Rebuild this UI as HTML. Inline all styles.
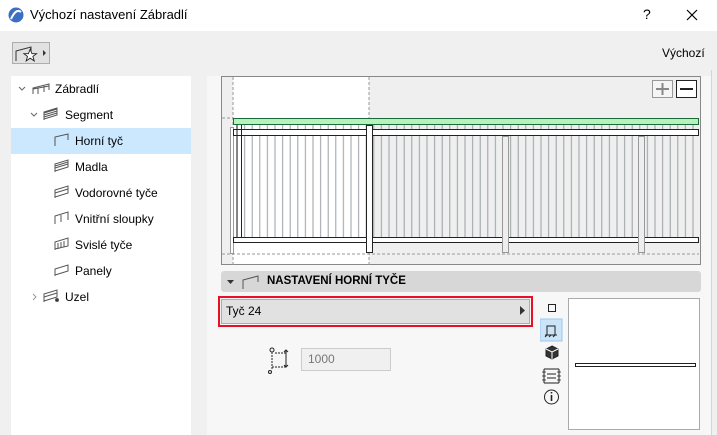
<!DOCTYPE html>
<html><head><meta charset="utf-8"><style>
*{margin:0;padding:0;box-sizing:border-box}
body{width:717px;height:435px;background:#f0f0f0;font-family:"Segoe UI","Liberation Sans",sans-serif;font-size:12px;color:#000;position:relative;overflow:hidden}
.abs{position:absolute}
.tree div{position:absolute;height:26px;line-height:26px;font-size:12px}
</style></head><body>
<div class="abs" style="left:0;top:0;width:717px;height:31px;background:#fff"></div>
<svg class="abs" style="left:8px;top:7px" width="18" height="18"><circle cx="8" cy="8" r="7.5" fill="#3b6fc4"/><path d="M3 12 Q8 1 13 5" stroke="#fff" stroke-width="2" fill="none"/></svg>
<div class="abs" style="left:30px;top:7px;font-size:13px">Výchozí nastavení Zábradlí</div>
<div class="abs" style="left:643px;top:6px;font-size:14px">?</div>
<svg class="abs" style="left:686px;top:9px" width="12" height="12"><path d="M1 1L11 11M11 1L1 11" stroke="#000" stroke-width="1.2"/></svg>
<div class="abs" style="left:12px;top:42px;width:38px;height:22px;border:1px solid #adadad;background:#e1e1e1"></div>
<svg class="abs" style="left:14px;top:44px" width="36" height="20"><path d="M2 17V7L17 3V8" stroke="#333" fill="none"/><path d="M18 8l2 5h5l-4 3 1.5 5-4.5-3-4.5 3 1.5-5-4-3h5z" stroke="#222" fill="#fff" transform="translate(0,-2) scale(.9)"/><path d="M29 6l3 3-3 3z" fill="#333"/></svg>
<div class="abs" style="left:662px;top:46px;font-size:12px">Výchozí</div>
<div class="abs tree" style="left:11px;top:76px;width:180px;height:359px;background:#fff">
<div style="left:0;top:52px;width:180px;background:#cce8ff"></div>
<div style="left:44px;top:0">Zábradlí</div>
<div style="left:54px;top:26px">Segment</div>
<div style="left:64px;top:52px">Horní tyč</div>
<div style="left:64px;top:78px">Madla</div>
<div style="left:64px;top:104px">Vodorovné tyče</div>
<div style="left:64px;top:130px">Vnitřní sloupky</div>
<div style="left:64px;top:156px">Svislé tyče</div>
<div style="left:64px;top:182px">Panely</div>
<div style="left:54px;top:208px">Uzel</div>
</div>
<svg class="abs" style="left:11px;top:76px" width="60" height="240" stroke="#555" fill="none">
<path d="M8 11l3 3 3-3M20 37l3 3 3-3" stroke="#666"/>
<path d="M22 218l3 3-3 3" stroke="#999"/>
<path d="M22 18V12L38 8V14M22 13L38 10M27 18V12M33 16V10"/>
<path d="M33 44V36L46 32V39L33 43M33 37L46 33M33 39L46 35M33 41L46 37"/>
<path d="M44 70V61L57 58V64"/>
<path d="M44 96V88L57 84V91L44 95M44 90L57 86M44 92L57 88"/>
<path d="M44 122V114L57 110V117L44 121M44 117L57 113"/>
<path d="M44 148V140L57 136V144M50 146V139"/>
<path d="M44 174V166L57 162V170L44 173M47 167V173M50 166V172M53 165V171"/>
<path d="M44 200V193L57 189V195L44 199"/>
<path d="M33 226V218L46 214V221L33 225M33 221L46 217"/><circle cx="46" cy="224" r="1.5" fill="#333"/>
</svg>
<div class="abs" style="left:207px;top:76px;width:504px;height:359px;background:#f7f7f7"></div>
<div class="abs" style="left:711px;top:70px;width:1px;height:365px;background:#c8d8ec"></div>
<svg class="abs" style="left:221px;top:76px" width="480" height="190">
<rect x="0.5" y="0.5" width="479" height="188" fill="#efefef" stroke="#888"/>
<rect x="12" y="1" width="136" height="187" fill="#fff"/>
<defs><pattern id="b" x="12" y="0" width="7.6" height="200" patternUnits="userSpaceOnUse"><line x1="4" y1="0" x2="4" y2="200" stroke="#9aa0a4" stroke-width="1"/></pattern></defs>
<rect x="12" y="49" width="466" height="112" fill="url(#b)"/>
<path d="M12 1V189M148 1V189M1 42H12M1 178H478" stroke="#999" stroke-dasharray="3 2"/>
<rect x="9.5" y="51.5" width="3" height="126" fill="#fff" stroke="#999"/>
<rect x="12.5" y="42.5" width="465" height="6" fill="#b5f2c0" stroke="#1a6b35"/>
<rect x="12.5" y="53.5" width="465" height="6" fill="#fff" stroke="#222"/>
<rect x="12.5" y="161.5" width="465" height="5" fill="#fff" stroke="#222"/>
<rect x="145.5" y="49.5" width="6" height="127" fill="#fff" stroke="#222"/>
<rect x="281.5" y="60.5" width="6" height="116" fill="#eee" stroke="#999"/>
<rect x="417.5" y="60.5" width="6" height="116" fill="#eee" stroke="#999"/>
<path d="M16 49V161M20.5 49V161" stroke="#222"/>
<rect x="431.5" y="4.5" width="20" height="17" fill="#f5f5f5" stroke="#999"/><path d="M441.5 7V19M435 13H448" stroke="#888" stroke-width="2"/>
<rect x="455.5" y="4.5" width="20" height="17" fill="#fff" stroke="#222"/><path d="M459 13H472" stroke="#222" stroke-width="2"/>
</svg>
<div class="abs" style="left:221px;top:271px;width:480px;height:21px;background:#d7d7d7;border-radius:3px"></div>
<svg class="abs" style="left:226px;top:274px" width="40" height="16"><path d="M1 6h7l-3.5 4z" fill="#333"/><path d="M17 15V6L32 2V8" stroke="#555" fill="none"/></svg>
<div class="abs" style="left:267px;top:275px;font-weight:bold;font-size:11.5px">NASTAVENÍ HORNÍ TYČE</div>
<div class="abs" style="left:218px;top:296px;width:315px;height:31px;border:2px solid #e81123"></div>
<div class="abs" style="left:221px;top:299px;width:309px;height:25px;background:#e1e1e1;border:1px solid #adadad;line-height:23px;padding-left:4px">Tyč 24</div>
<svg class="abs" style="left:520px;top:306px" width="6" height="9"><path d="M0 0L5 4.5L0 9z" fill="#333"/></svg>
<svg class="abs" style="left:264px;top:345px" width="30" height="32" stroke="#222" fill="none"><circle cx="8" cy="5" r="2"/><path d="M8 7V24M8 22H22M22 8H10" stroke-dasharray="2 1"/><path d="M22 5V22M20 7l2-2 2 2M20 20l2 2 2-2"/><circle cx="6" cy="27" r="1.5"/></svg>
<div class="abs" style="left:301px;top:348px;width:90px;height:23px;border:1px solid #ccc;background:#f0f0f0;color:#777;line-height:21px;padding-left:6px">1000</div>
<svg class="abs" style="left:540px;top:300px" width="24" height="110" stroke="#222" fill="none">
<rect x="8.5" y="4.5" width="7" height="7"/>
<rect x="0" y="19" width="22" height="22" fill="#cce4f7" stroke="#99c9ef"/>
<path d="M7 35V26H15V35M5 35H17M5 37l2-2M9 37l2-2M13 37l2-2"/>
<path d="M12 46l6 3v7l-6 3-6-3v-7z" fill="#333"/><path d="M6 49l6 3 6-3M12 52v7" stroke="#fff"/>
<path d="M4 69V83M19 69V83M4 69H19M4 83H19M7 74H16M7 78H16"/><path d="M2 72h4M2 76h4M2 80h4M17 72h4M17 76h4M17 80h4" stroke-width=".8"/>
<circle cx="11.5" cy="97" r="7"/><path d="M11.5 95V101M11.5 92v1.5" stroke-width="1.6"/>
</svg>
<div class="abs" style="left:568px;top:298px;width:132px;height:132px;background:#fff;border:1px solid #aaa"></div>
<div class="abs" style="left:575px;top:363px;width:121px;height:4px;border:1px solid #222;background:#fff"></div>
</body></html>
